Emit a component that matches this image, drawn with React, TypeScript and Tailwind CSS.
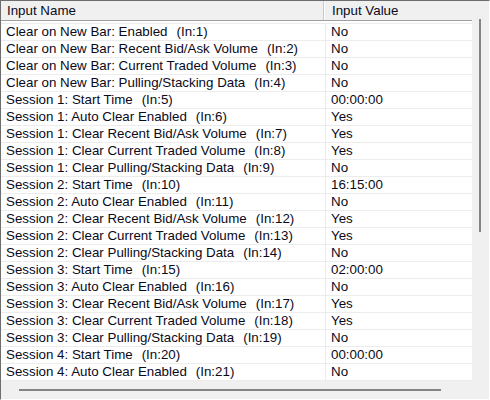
import React from "react";

const rows: [string, string, string][] = [
	["Clear on New Bar: Enabled", "1", "No"],
	["Clear on New Bar: Recent Bid/Ask Volume", "2", "No"],
	["Clear on New Bar: Current Traded Volume", "3", "No"],
	["Clear on New Bar: Pulling/Stacking Data", "4", "No"],
	["Session 1: Start Time", "5", "00:00:00"],
	["Session 1: Auto Clear Enabled", "6", "Yes"],
	["Session 1: Clear Recent Bid/Ask Volume", "7", "Yes"],
	["Session 1: Clear Current Traded Volume", "8", "Yes"],
	["Session 1: Clear Pulling/Stacking Data", "9", "No"],
	["Session 2: Start Time", "10", "16:15:00"],
	["Session 2: Auto Clear Enabled", "11", "No"],
	["Session 2: Clear Recent Bid/Ask Volume", "12", "Yes"],
	["Session 2: Clear Current Traded Volume", "13", "Yes"],
	["Session 2: Clear Pulling/Stacking Data", "14", "No"],
	["Session 3: Start Time", "15", "02:00:00"],
	["Session 3: Auto Clear Enabled", "16", "No"],
	["Session 3: Clear Recent Bid/Ask Volume", "17", "Yes"],
	["Session 3: Clear Current Traded Volume", "18", "Yes"],
	["Session 3: Clear Pulling/Stacking Data", "19", "No"],
	["Session 4: Start Time", "20", "00:00:00"],
	["Session 4: Auto Clear Enabled", "21", "No"],
];

export default function App() {
	return (
		<div
			className="w-[490px] h-[400px] flex flex-col bg-[#f0f0f0] border-t border-l border-[#6d6d6d] border-r border-r-white border-b border-b-white text-[13.33px] leading-none text-[#0a0a1a]"
			style={{ fontFamily: '"Liberation Sans", Arial, sans-serif' }}
		>
			<div className="flex h-[380px]">
				{/* list */}
				<div className="w-[471px] flex flex-col bg-white">
					<div className="flex h-[20px] bg-[#f0f0f0] border-b border-[#a0a0a0]">
						<div className="w-[323px] flex items-center pl-[6px] border-r border-[#c8c8c8]">
							Input Name
						</div>
						<div className="flex-1 flex items-center pl-[7px] border-l border-white">
							Input Value
						</div>
					</div>
					<div className="pt-[2px]">
						<div className="border-t border-[#ececec]">
							{rows.map(([name, n, val]) => (
								<div key={n} className="flex h-[17px] border-b border-[#ececec]">
									<div className="w-[325px] flex items-center pl-[5px] border-r border-[#ececec] whitespace-nowrap">
										<span>{name}</span>
										<span className="ml-[9px]">(In:{n})</span>
									</div>
									<div className="flex-1 flex items-center pl-[5px]">{val}</div>
								</div>
							))}
						</div>
					</div>
				</div>
				{/* vertical scrollbar */}
				<div className="flex-1 pt-[18px] pl-[7px]">
					<div className="w-[2px] h-[213px] bg-[#858585]" />
				</div>
			</div>
			{/* horizontal scrollbar */}
			<div className="flex-1 pt-[8px] pl-[18px]">
				<div className="w-[422px] h-[2px] bg-[#858585]" />
			</div>
		</div>
	);
}
